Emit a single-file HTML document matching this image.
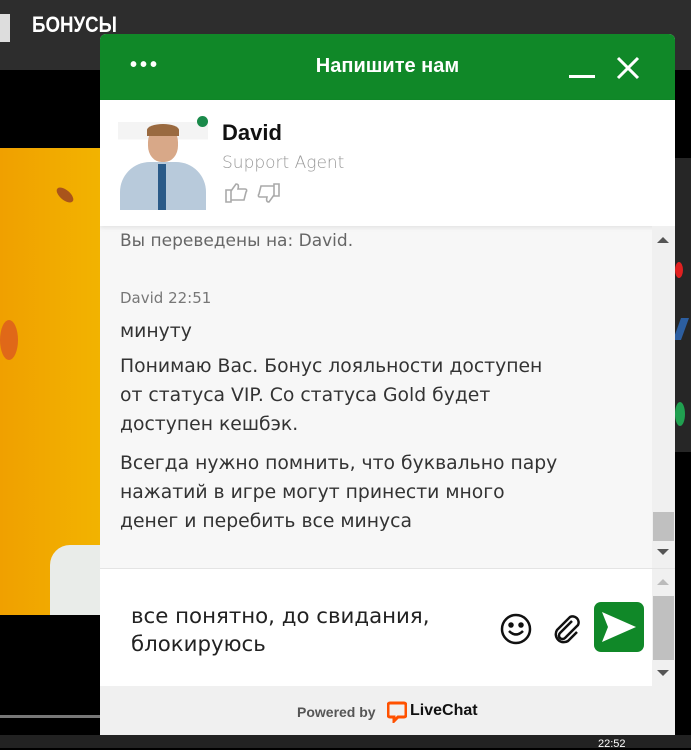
<!DOCTYPE html>
<html><head><meta charset="utf-8"><style>
*{margin:0;padding:0;box-sizing:border-box}
body{width:691px;height:748px;overflow:hidden;background:#000;font-family:"Liberation Sans",sans-serif;position:relative}
.a{position:absolute}
.t{font-family:"DejaVu Sans","Liberation Sans",sans-serif}
</style></head><body>
<div class="a" style="left:0;top:0;width:691px;height:70px;background:#2d2d2d"></div>
<div class="a" style="left:0;top:14px;width:10px;height:28px;background:#ddd"></div>
<div class="a" style="left:32px;top:12px;color:#fff;font-weight:bold;font-size:22px;transform:scaleX(.85);transform-origin:left">БОНУСЫ</div>
<div class="a" style="left:0;top:148px;width:100px;height:467px;background:linear-gradient(90deg,#f0a000,#f2b300)"></div>
<div class="a" style="left:55px;top:190px;width:20px;height:10px;background:#a9541b;border-radius:50%;transform:rotate(40deg)"></div>
<div class="a" style="left:0;top:320px;width:18px;height:40px;background:#e06818;border-radius:50%"></div>
<div class="a" style="left:50px;top:545px;width:50px;height:70px;background:#e9ece9;border-radius:20px 0 0 0"></div>
<div class="a" style="left:0;top:715px;width:100px;height:3px;background:#777"></div>
<div class="a" style="left:0;top:735px;width:691px;height:13px;background:#222"></div>
<div class="a" style="left:598px;top:738px;color:#fff;font-size:11px">22:52</div>
<div class="a" style="left:675px;top:158px;width:16px;height:294px;background:#262626"></div>
<div class="a" style="left:675px;top:262px;width:8px;height:16px;background:#e02020;border-radius:50%"></div>
<div class="a" style="left:677px;top:318px;width:8px;height:22px;background:#2c5ea0;transform:skewX(-20deg)"></div>
<div class="a" style="left:675px;top:402px;width:10px;height:24px;background:#20a050;border-radius:50%"></div>

<div class="a" style="left:100px;top:34px;width:575px;height:701px;background:#f7f7f7;border-radius:6px 6px 0 0;overflow:hidden">
 <div class="a" style="left:0;top:0;width:575px;height:66px;background:#108828"></div>
 <div class="a" style="left:30px;top:20px;color:#fff;font-size:20px;font-weight:bold;letter-spacing:3px">•••</div>
 <div class="a" style="left:0;top:21px;width:575px;text-align:center;color:#fff;font-size:20px;font-weight:bold">Напишите нам</div>
 <div class="a" style="left:469px;top:41px;width:26px;height:3px;background:#fff"></div>
 <svg class="a" style="left:516px;top:22px" width="24" height="24"><path d="M2 2L22 22M22 2L2 22" stroke="#fff" stroke-width="3"/></svg>
 <div class="a" style="left:0;top:66px;width:575px;height:126px;background:#fff;box-shadow:0 2px 4px rgba(0,0,0,.08)"></div>
 <div class="a" style="left:18px;top:88px;width:90px;height:88px;background:linear-gradient(180deg,#f4f4f4 0 20%,#fff 20%)"></div>
 <div class="a" style="left:48px;top:92px;width:30px;height:36px;background:#d8a888;border-radius:45%"></div>
 <div class="a" style="left:47px;top:90px;width:32px;height:12px;background:#9a6a40;border-radius:50% 50% 0 0"></div>
 <div class="a" style="left:20px;top:128px;width:86px;height:48px;background:#b8cadb;border-radius:30px 30px 0 0"></div>
 <div class="a" style="left:58px;top:130px;width:8px;height:46px;background:#2a5a88"></div>
 <div class="a" style="left:97px;top:82px;width:11px;height:11px;background:#1a8a4a;border-radius:50%"></div>
 <div class="a" style="left:122px;top:86px;font-size:22px;font-weight:bold;color:#111">David</div>
 <div class="a t" style="left:122px;top:119px;font-size:17px;color:#999;font-weight:200">Support Agent</div>
 <svg class="a" style="left:124px;top:146px" width="60" height="26" fill="none" stroke="#aaa" stroke-width="1.6"><path d="M2 10h5v12H2zM7 11l5-7c2 0 3 1 2 5h7c2 0 2 2 1 3l-2 8H7"/><path d="M55 16h-5V4h5zM50 15l-5 7c-2 0-3-1-2-5h-7c-2 0-2-2-1-3l2-8h13"/></svg>
 <div class="a t" style="left:20px;top:197px;font-size:17px;color:#666">Вы переведены на: David.</div>
 <div class="a t" style="left:20px;top:255px;font-size:15px;color:#777">David 22:51</div>
 <div class="a t" style="left:20px;top:283px;font-size:18.8px;color:#333;line-height:29px">минуту</div>
 <div class="a t" style="left:20px;top:318px;font-size:18.8px;color:#333;line-height:29px;width:530px">Понимаю Вас. Бонус лояльности доступен<br>от статуса VIP. Со статуса Gold будет<br>доступен кешбэк.</div>
 <div class="a t" style="left:20px;top:415px;font-size:18.8px;color:#333;line-height:29px;width:530px">Всегда нужно помнить, что буквально пару<br>нажатий в игре могут принести много<br>денег и перебить все минуса</div>
 <div class="a" style="left:552px;top:192px;width:23px;height:342px;background:#f0f0f0"></div>
 <div class="a" style="left:557px;top:203px;border:6px solid transparent;border-bottom:6px solid #555;border-top:0"></div>
 <div class="a" style="left:553px;top:478px;width:21px;height:29px;background:#c0c0c0"></div>
 <div class="a" style="left:557px;top:515px;border:6px solid transparent;border-top:6px solid #555;border-bottom:0"></div>
 <div class="a" style="left:0;top:534px;width:575px;height:118px;background:#fff;border-top:1px solid #e4e4e4"></div>
 <div class="a" style="left:552px;top:535px;width:23px;height:117px;background:#f0f0f0"></div>
 <div class="a" style="left:557px;top:545px;border:6px solid transparent;border-bottom:6px solid #bbb;border-top:0"></div>
 <div class="a" style="left:553px;top:562px;width:21px;height:64px;background:#c0c0c0"></div>
 <div class="a" style="left:557px;top:636px;border:6px solid transparent;border-top:6px solid #555;border-bottom:0"></div>
 <div class="a t" style="left:31px;top:569px;font-size:21.3px;color:#222;line-height:28px">все понятно, до свидания,<br>блокируюсь</div>
 <svg class="a" style="left:399px;top:578px" width="34" height="34" fill="none" stroke="#111" stroke-width="2.5"><circle cx="17" cy="17" r="14"/><circle cx="12" cy="13" r="1.5" fill="#111"/><circle cx="22" cy="13" r="1.5" fill="#111"/><path d="M10 19q7 7 14 0"/></svg>
 <svg class="a" style="left:450px;top:578px" width="34" height="34" fill="none" stroke="#111" stroke-width="2.5"><path d="M22 9L10 21a3.5 3.5 0 0 0 5 5l13-13a6 6 0 0 0-8-8L7 18a8 8 0 0 0 11 11l9-9"/></svg>
 <div class="a" style="left:494px;top:568px;width:50px;height:50px;background:#108828;border-radius:7px"></div>
 <svg class="a" style="left:499px;top:575px" width="40" height="36"><path d="M3 3L37 18L3 33L9 18z" fill="#fff"/></svg>
 <div class="a" style="left:0;top:652px;width:575px;height:49px;background:#f0f0f0"></div>
 <div class="a" style="left:197px;top:670px;font-size:14px;font-weight:bold;color:#555">Powered by</div>
 <svg class="a" style="left:287px;top:667px" width="20" height="22"><path d="M3 2h14a2 2 0 0 1 2 2v10a2 2 0 0 1-2 2h-6l-4 4v-4H3a2 2 0 0 1-2-2V4a2 2 0 0 1 2-2z" fill="none" stroke="#ff5100" stroke-width="3"/></svg>
 <div class="a" style="left:310px;top:668px;font-size:16px;font-weight:bold;color:#111">LiveChat</div>
</div>
</body></html>
